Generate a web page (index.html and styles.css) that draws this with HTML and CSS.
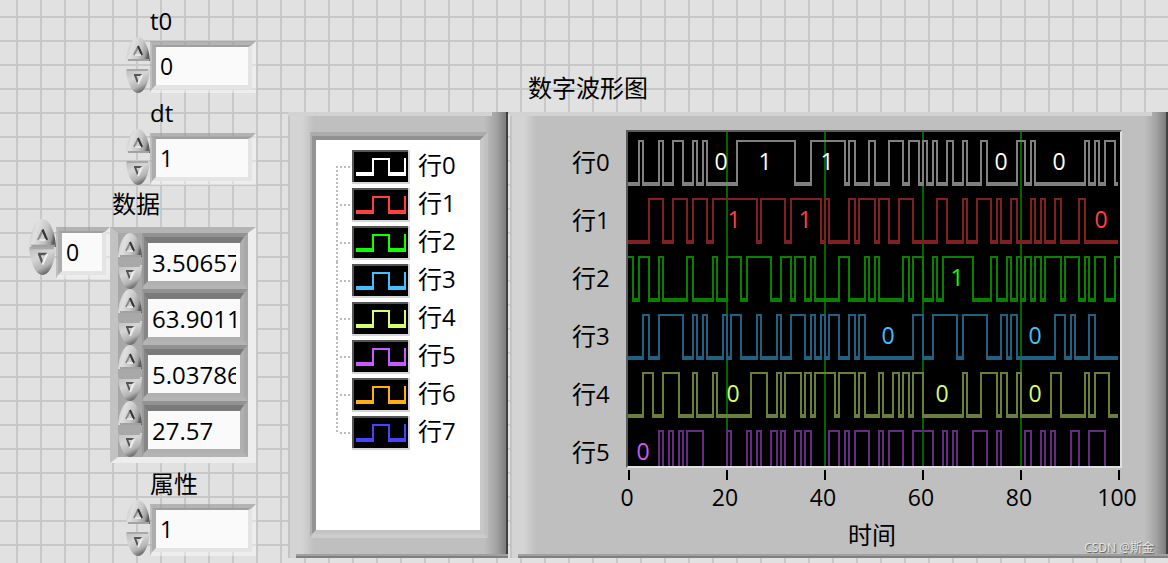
FILE: index.html
```html
<!DOCTYPE html>
<html lang="zh-CN">
<head>
<meta charset="utf-8">
<title>数字波形图</title>
<link rel="stylesheet" href="styles.css">
</head>
<body>
<svg class="defs" aria-hidden="true">
  <defs>
    <linearGradient id="metal" x1="0" y1="0.2" x2="1" y2="0.5">
      <stop offset="0" stop-color="#c2c2c2"/>
      <stop offset="0.3" stop-color="#e0e0e0"/>
      <stop offset="0.65" stop-color="#c6c6c6"/>
      <stop offset="0.88" stop-color="#a0a0a0"/>
      <stop offset="1" stop-color="#5c5c5c"/>
    </linearGradient>
    <linearGradient id="metal-down" x1="0.2" y1="0" x2="0.7" y2="1">
      <stop offset="0" stop-color="#c0c0c0"/>
      <stop offset="0.35" stop-color="#d6d6d6"/>
      <stop offset="0.7" stop-color="#b4b4b4"/>
      <stop offset="1" stop-color="#505050"/>
    </linearGradient>
    <symbol id="up" viewBox="0 0 24 24" preserveAspectRatio="none">
      <path d="M0 24C1 10 6 0 12 0s11 10 12 24z" fill="url(#metal)"/>
      <path d="M2 23h21" stroke="#a2a2a2" stroke-width="2"/>
      <path d="M8 18l4-8" stroke="#8c8c8c" stroke-width="2" fill="none"/>
      <path d="M12 9l4 9" stroke="#333" stroke-width="2" fill="none"/>
      <path d="M9 18h6" stroke="#e4e4e4" stroke-width="2"/>
    </symbol>
    <symbol id="down" viewBox="0 0 24 24" preserveAspectRatio="none">
      <path d="M0 0c1 14 6 24 12 24s11-10 12-24z" fill="url(#metal-down)"/>
      <path d="M1 1h21" stroke="#a8a8a8" stroke-width="2"/>
      <path d="M8 6h8M9 6l3 8" stroke="#555" stroke-width="2" fill="none"/>
      <path d="M16 6l-4 9" stroke="#eee" stroke-width="2" fill="none"/>
    </symbol>
  </defs>
</svg>
<main class="front-panel">
  <form class="controls">
    <div class="group">
      <label class="caption" for="t0">t0</label>
      <div class="control">
        <span class="stepper"><button type="button" aria-label="t0 +"><svg><use href="#up"/></svg></button><button type="button" aria-label="t0 -"><svg><use href="#down"/></svg></button></span>
        <span class="well"><input id="t0" value="0"></span>
      </div>
    </div>
    <div class="group">
      <label class="caption" for="dt">dt</label>
      <div class="control">
        <span class="stepper"><button type="button" aria-label="dt +"><svg><use href="#up"/></svg></button><button type="button" aria-label="dt -"><svg><use href="#down"/></svg></button></span>
        <span class="well"><input id="dt" value="1"></span>
      </div>
    </div>
    <div class="group group-data">
      <label class="caption" for="index">数据</label>
      <div class="data-row">
        <span class="stepper stepper-index"><button type="button" aria-label="索引 +"><svg><use href="#up"/></svg></button><button type="button" aria-label="索引 -"><svg><use href="#down"/></svg></button></span>
        <span class="well well-index"><input id="index" value="0"></span>
        <div class="array">
          <div class="cell">
            <span class="stepper"><button type="button" aria-label="0 +"><svg><use href="#up"/></svg></button><button type="button" aria-label="0 -"><svg><use href="#down"/></svg></button></span>
            <span class="well well-cell"><input aria-label="数据 0" value="3.50657"></span>
          </div>
          <div class="cell">
            <span class="stepper"><button type="button" aria-label="1 +"><svg><use href="#up"/></svg></button><button type="button" aria-label="1 -"><svg><use href="#down"/></svg></button></span>
            <span class="well well-cell"><input aria-label="数据 1" value="63.9011"></span>
          </div>
          <div class="cell">
            <span class="stepper"><button type="button" aria-label="2 +"><svg><use href="#up"/></svg></button><button type="button" aria-label="2 -"><svg><use href="#down"/></svg></button></span>
            <span class="well well-cell"><input aria-label="数据 2" value="5.03786"></span>
          </div>
          <div class="cell">
            <span class="stepper"><button type="button" aria-label="3 +"><svg><use href="#up"/></svg></button><button type="button" aria-label="3 -"><svg><use href="#down"/></svg></button></span>
            <span class="well well-cell"><input aria-label="数据 3" value="27.57"></span>
          </div>
        </div>
      </div>
    </div>
    <div class="group group-attr">
      <label class="caption" for="attr">属性</label>
      <div class="control">
        <span class="stepper"><button type="button" aria-label="属性 +"><svg><use href="#up"/></svg></button><button type="button" aria-label="属性 -"><svg><use href="#down"/></svg></button></span>
        <span class="well"><input id="attr" value="1"></span>
      </div>
    </div>
  </form>

  <section class="panel legend">
    <div class="tree"><ul id="legend"></ul></div>
  </section>

  <section class="graph">
    <h1 class="graph-title">数字波形图</h1>
    <div class="panel scope">
      <ul class="line-names" id="names"></ul>
      <svg class="plot" id="plot"></svg>
      <svg class="axis" id="axis"></svg>
      <p class="axis-name">时间</p>
      <span class="watermark">CSDN @斯金</span>
    </div>
  </section>
</main>
<script src="script.js"></script>
</body>
</html>
```
FILE: styles.css
```css
* {
  box-sizing: border-box;
}

body {
  margin: 0;
  color: #000;
  font: 24px/32px "Open Sans", "Noto Sans CJK SC", sans-serif;
  background-color: #e1e1e1;
  background-image:
    repeating-linear-gradient(to right, transparent 0 16px, #c8c8c8 16px 18px, transparent 18px 24px),
    repeating-linear-gradient(to bottom, transparent 0 16px, #c8c8c8 16px 18px, transparent 18px 24px);
}

ul,
h1,
p {
  margin: 0;
  padding: 0;
  font: inherit;
  list-style: none;
}

.defs {
  position: absolute;
  width: 0;
  height: 0;
}

.front-panel {
  display: grid;
  grid-template-columns: 288px 220px minmax(0, 1fr);
  min-height: 100vh;
  padding-bottom: 5px;
}

/* numeric controls */
.controls {
  display: flex;
  flex-direction: column;
  gap: 4px;
  padding-top: 5px;
}

.caption {
  display: block;
  margin-left: 150px;
}

.group-data .caption {
  height: 30px;
  margin-left: 112px;
  line-height: 30px;
}

.group-attr {
  margin-top: 1px;
}

.control {
  display: flex;
  align-items: flex-end;
  margin-left: 126px;
}

.data-row {
  display: flex;
  align-items: flex-start;
  margin-left: 29px;
}

.stepper {
  display: flex;
  flex-direction: column;
  justify-content: space-between;
  width: 24px;
  height: 56px;
}

.stepper button {
  display: block;
  width: 100%;
  height: 24px;
  padding: 0;
  border: 0;
  background: none;
}

.stepper svg {
  display: block;
  width: 100%;
  height: 100%;
}

.stepper-index {
  width: 27px;
}

.stepper-index button {
  height: 28px;
}

.well {
  display: flex;
  width: 106px;
  border: 4px solid;
  border-left-width: 2px;
  border-color: rgba(150, 150, 150, 0.6) rgba(255, 255, 255, 0.4) rgba(255, 255, 255, 0.4) rgba(170, 170, 170, 0.6);
}

.well input {
  width: 100%;
  height: 44px;
  padding: 0 4px;
  border: 4px solid;
  border-top-width: 2px;
  border-color: #a0a0a0 #e4e4e4 #e4e4e4 #acacac;
  outline: 0;
  border-radius: 0;
  background: #fafafa;
  color: #000;
  font: 23px/38px "Open Sans", "Noto Sans CJK SC", sans-serif;
}

.well-index {
  width: 54px;
  margin-top: 8px;
}

.array {
  width: 146px;
  margin-top: 8px;
  border: solid;
  border-width: 6px 8px;
  border-color: #b4b4b4 #ededed #ededed #c2c2c2;
  background: #a8a8a8;
}

.cell {
  display: flex;
}

.well-cell {
  border-color: #929292 #a8a8a8 #b4b4b4 #9a9a9a;
}

.well-cell input {
  height: 48px;
  border-top-width: 6px;
  border-color: #7a7a7a #b0b0b0 #b0b0b0 #868686;
  font-size: 24px;
}

/* raised metal plates */
.panel {
  background:
    linear-gradient(#d2d2d2, #d2d2d2) 0 0 / calc(100% - 16px) 4px no-repeat,
    linear-gradient(#a0a0a0 50%, #808080 50%) 100% 100% / calc(100% - 8px) 4px no-repeat,
    linear-gradient(to right, #c4c4c4 0 2px, #d4d4d4 2px 14px, #bfbfbf 26px calc(100% - 24px), #a4a4a4 calc(100% - 12px), #7c7c7c calc(100% - 2px), #404040 calc(100% - 2px));
}

.legend {
  display: flex;
  margin-top: 112px;
  padding: 20px 20px 20px 22px;
}

.tree {
  display: flex;
  flex: 1;
  border: 4px solid;
  border-left-width: 2px;
  border-color: #acacac #c0c0c0 #cccccc #b0b0b0;
}

.tree ul {
  flex: 1;
  padding: 8px 0 0 20px;
  border: 4px solid;
  border-color: #909090 #c8c8c8 #c4c4c4 #949494;
  background: #fff;
}

.tree li {
  display: flex;
  align-items: center;
  gap: 8px;
  height: 38px;
  line-height: 30px;
}

.tree li span {
  padding-bottom: 4px;
}

.tree svg {
  width: 74px;
  height: 38px;
}

/* waveform graph */
.graph {
  display: flex;
  flex-direction: column;
  padding-left: 2px;
}

.graph-title {
  height: 112px;
  padding: 72px 0 0 18px;
}

.scope {
  position: relative;
  display: grid;
  flex: 1;
  grid-template-columns: 54px minmax(0, 1fr);
  grid-template-rows: 338px 44px auto;
  padding: 18px 46px 0 62px;
}

.line-names {
  padding-top: 3px;
}

.line-names li {
  height: 58px;
  line-height: 58px;
}

.plot {
  width: 100%;
  height: 338px;
  border: 2px solid;
  border-color: #5a5a5a #e0e0e0 #e0e0e0 #5a5a5a;
  background: #000;
}

.axis {
  grid-column: 2;
  width: 100%;
  height: 44px;
  overflow: visible;
}

.plot text,
.axis text {
  font-size: 23px;
  text-anchor: middle;
}

.axis-name {
  grid-column: 2;
  padding: 7px 4px 0 0;
  text-align: center;
}

.watermark {
  position: absolute;
  right: 14px;
  bottom: 2px;
  color: #e6e6e6;
  font-size: 12px;
  line-height: 16px;
  text-shadow: 1px 1px 1px #555;
}
```
FILE: script.js
```js
// Each line holds its first level and the sample numbers at which it toggles.
const lines = [
  { bright: '#ffffff', dim: '#808080', level: 0, toggles: [2,3,6,7,9,11,13,14,15,16,22,34,37,44,45,46,49,50,53,56,57,59,60,61,62,63,65,66,68,69,72,73,79,81,82,83,93,94,95,96,97,99] },
  { bright: '#ff4040', dim: '#802020', level: 0, toggles: [4,7,9,12,13,16,17,26,27,32,33,39,40,41,45,46,47,50,51,53,55,58,63,65,68,69,71,74,75,76,78,79,82,83,84,85,87,88,92,93] },
  { bright: '#10ff00', dim: '#088000', level: 1, toggles: [1,2,4,6,7,12,13,17,18,20,23,24,29,31,33,34,36,37,38,43,45,48,49,50,51,56,57,58,60,62,63,64,70,74,75,77,78,79,80,81,82,83,84,85,88,89,92,93,94,95,97,99] },
  { bright: '#40c0ff', dim: '#206080', level: 0, toggles: [3,4,6,11,13,14,15,16,19,20,21,23,26,27,30,31,33,36,37,38,39,40,41,43,45,46,47,48,58,60,62,67,68,73,76,77,78,79,87,89,90,91,94,95] },
  { bright: '#d4ff70', dim: '#6a8038', level: 0, toggles: [3,5,7,10,13,14,17,18,25,28,30,31,32,35,36,37,38,42,43,46,47,48,51,52,54,55,56,57,58,60,68,69,72,75,76,77,79,80,86,88,93,94,95,98] },
  { bright: '#c858ff', dim: '#642c80', level: 0, toggles: [6,7,8,9,10,11,12,15,20,21,24,25,26,27,29,30,31,32,34,35,36,37,41,43,44,45,46,49,51,52,53,56,58,62,64,65,66,67,70,73,75,76,81,82,84,85,86,87,90,92,94,97] },
  { bright: '#ffb010' },
  { bright: '#4444ff' }
];
const samples = 100;
const rowPitch = 58;
const minLabelled = 6;

const rect = (x, y, w, h, fill) =>
  `<rect x="${x}" y="${y}" width="${w}" height="${h}" fill="${fill}"/>`;

function drawLegend() {
  const last = lines.length - 1;
  document.getElementById('legend').innerHTML = lines.map((line, i) => {
    const from = i === 0 ? 18 : 0;
    const to = i === last ? 20 : 38;
    return `<li><svg viewBox="0 0 74 38" aria-hidden="true">
      <path d="M1 ${from}V${to}M4 19H16" stroke="#bbb" stroke-width="2" stroke-dasharray="2 2"/>
      ${rect(16, 2, 58, 34, '#d6d6d6')}${rect(16, 2, 56, 32, '#555')}${rect(18, 4, 54, 30, '#000')}
      <path d="M20 24h16V10h18v14h14V10h2v18H52V12H38v16H20z" fill="${line.bright}"/>
    </svg><span>行${i}</span></li>`;
  }).join('');
}

function drawPlot() {
  const plot = document.getElementById('plot');
  const width = plot.clientWidth;
  const at = n => 2 * Math.round(n * (width - 2) / samples / 2);
  let out = '';
  for (let n = 20; n < samples; n += 20) out += rect(at(n), 0, 2, 334, '#006400');
  const traces = lines.filter(line => line.toggles);
  traces.forEach((line, row) => {
    const top = 8 + row * rowPitch;
    const edges = [0, ...line.toggles, samples];
    let level = line.level;
    for (let k = 0; k < edges.length - 1; k++) {
      const x0 = at(edges[k]);
      const x1 = at(edges[k + 1]);
      if (k > 0) out += rect(x0, top, 2, 46, line.dim);
      out += level ? rect(x0, top, x1 - x0 + 2, 2, line.dim) : rect(x0, top + 42, x1 - x0, 4, line.dim);
      if (edges[k + 1] - edges[k] >= minLabelled) {
        out += `<text x="${Math.round((x0 + x1) / 2)}" y="${top + 30}" fill="${line.bright}">${level}</text>`;
      }
      level = 1 - level;
    }
  });
  plot.innerHTML = out;

  let axis = '';
  for (let n = 0; n <= samples; n += 20) {
    axis += rect(at(n) + 2, 2, 2, 10, '#000');
    axis += `<text x="${at(n) + 1}" y="38">${n}</text>`;
  }
  document.getElementById('axis').innerHTML = axis;
  document.getElementById('names').innerHTML = traces.map((_, i) => `<li>行${i}</li>`).join('');
}

drawLegend();
drawPlot();
window.addEventListener('resize', drawPlot);
```
